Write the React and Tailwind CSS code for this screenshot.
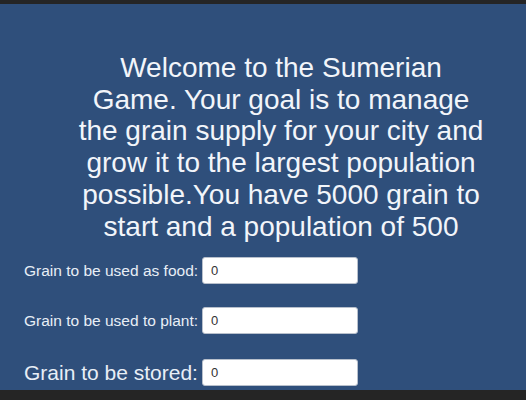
export default function App() {
  const rows = [
    { label: "Grain to be used as food:", size: "text-[15.5px]" },
    { label: "Grain to be used to plant:", size: "text-[15.5px]" },
    { label: "Grain to be stored:", size: "text-[21px]" },
  ];
  return (
    <div className="h-[400px] w-[526px] overflow-hidden bg-[#252525] flex flex-col" style={{ fontFamily: '"Liberation Sans", Arial, sans-serif' }}>
      <div className="h-[4px] shrink-0" />
      <div className="h-[386px] shrink-0 bg-[#2f4f7b] flex flex-col pt-[48px]">
        <div className="ml-[78px] w-[406px] text-center text-[28px] leading-[31.7px] text-[#f2f5fa]">
          Welcome to the Sumerian Game. Your goal is to manage the grain supply for your city and grow it to the largest population possible.You have 5000 grain to start and a population of 500
        </div>
        <div className="grid grid-cols-[178px_156px] gap-y-[23px] mt-[15px] pl-[24px] items-center">
          {rows.map((r) => (
            <div key={r.label} className="contents">
              <span className={`${r.size} text-[#e8eef6] whitespace-nowrap`}>{r.label}</span>
              <input
                readOnly
                value="0"
                className="w-[156px] h-[27px] bg-white rounded-[3px] border border-[#b8c0cc] pl-[8px] text-[13px] text-[#333] outline-none"
                style={{ fontFamily: '"Liberation Sans", Arial, sans-serif' }}
              />
            </div>
          ))}
        </div>
      </div>
    </div>
  );
}
